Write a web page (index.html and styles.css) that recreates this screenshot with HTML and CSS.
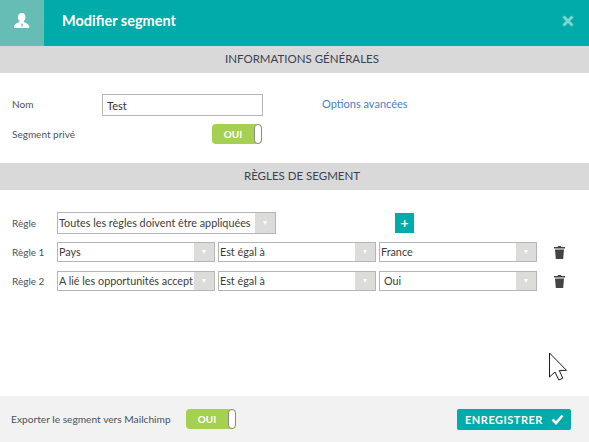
FILE: index.html
```html
<!DOCTYPE html>
<html lang="fr">
<head>
<meta charset="utf-8">
<title>Modifier segment</title>
<link rel="stylesheet" href="styles.css">
</head>
<body>
<div class="modal">
  <header class="head">
    <div class="head-icon">
      <svg width="18" height="18" viewBox="0 0 18 18"><path fill="#fff" d="M9 1c2.200 0 3.500 1.700 3.500 3.900 0 1.700-.7 3.100-1.700 3.900v1.300c1.200.8 4.300 1.500 5.200 3.400.3.600.3 1.400.3 2.500H1c0-1.100 0-1.900.3-2.500.9-1.900 4-2.600 5.200-3.400V8.800C5.500 8 4.800 6.600 4.800 4.900 4.800 2.700 6.800 1 9 1z"/><path fill="#66bdb5" d="M9 16l-1.200-5 1.200 1.400L10.200 11z"/></svg>
    </div>
    <h1 class="head-title">Modifier segment</h1>
    <svg class="head-close" width="12" height="12" viewBox="0 0 12 12"><path d="M1.500 1.500l9 9M10.500 1.500l-9 9" stroke="#7fd5cf" stroke-width="3"/></svg>
  </header>

  <h2 class="bar">INFORMATIONS GÉNÉRALES</h2>
  <section class="general">
    <div class="general-labels">
      <div class="label label-nom">Nom</div>
      <div class="label label-prive">Segment privé</div>
    </div>
    <div class="general-fields">
      <input class="text-input" type="text" value="Test">
      <div class="toggle"><span class="toggle-on">OUI</span><span class="toggle-knob"></span></div>
    </div>
    <a class="advanced" href="#">Options avancées</a>
  </section>

  <h2 class="bar">RÈGLES DE SEGMENT</h2>
  <section class="rules">
    <div class="rule-row rule-head">
      <span class="label rule-label">Règle</span>
      <div class="select select-wide"><span class="select-text">Toutes les règles doivent être appliquées</span><span class="select-arrow"></span></div>
      <button class="add-btn" type="button">+</button>
    </div>
    <div class="rule-row">
      <span class="label rule-label">Règle 1</span>
      <div class="select"><span class="select-text">Pays</span><span class="select-arrow"></span></div>
      <div class="select"><span class="select-text">Est égal à</span><span class="select-arrow"></span></div>
      <div class="select"><span class="select-text">France</span><span class="select-arrow"></span></div>
      <svg class="trash" width="11" height="13" viewBox="0 0 11 13"><path fill="#444" d="M4 0h3l.4 1H11v1.500H0V1h3.600zM1 3.500h9L9.200 13H1.800z"/></svg>
    </div>
    <div class="rule-row">
      <span class="label rule-label">Règle 2</span>
      <div class="select"><span class="select-text">A lié les opportunités accept</span><span class="select-arrow"></span></div>
      <div class="select"><span class="select-text">Est égal à</span><span class="select-arrow"></span></div>
      <div class="select"><span class="select-text select-indent">Oui</span><span class="select-arrow"></span></div>
      <svg class="trash" width="11" height="13" viewBox="0 0 11 13"><path fill="#444" d="M4 0h3l.4 1H11v1.500H0V1h3.600zM1 3.500h9L9.200 13H1.800z"/></svg>
    </div>
  </section>

  <footer class="foot">
    <span class="foot-label">Exporter le segment vers Mailchimp</span>
    <div class="toggle"><span class="toggle-on">OUI</span><span class="toggle-knob"></span></div>
    <button class="save" type="button">ENREGISTRER
      <svg width="13" height="11" viewBox="0 0 13 11"><path d="M1.500 5.500l3.500 3.500 6.500-7.500" fill="none" stroke="#fff" stroke-width="2.600"/></svg>
    </button>
  </footer>

  <svg class="cursor" width="20" height="29" viewBox="0 0 20 29"><path fill="#fff" stroke="#1a1a2a" stroke-width="1" d="M1.500 1v24l5.500-5 3.800 8 4-1.800-3.500-7.700 7.200-.2z"/></svg>
</div>
</body>
</html>
```
FILE: styles.css
```css
* { box-sizing: border-box; }
html, body { margin: 0; padding: 0; background: #fff; }
body { font-family: "Lato", "Liberation Sans", sans-serif; color: #3d4654; }
.modal { position: relative; width: 589px; height: 442px; overflow: hidden; display: flex; flex-direction: column; }

.head { height: 46px; background: #00aba9; display: flex; align-items: center; flex: none; }
.head-icon { width: 44px; height: 46px; background: #66bdb5; display: flex; align-items: center; justify-content: center; padding-bottom: 5px; }
.head-title { margin: 0 0 5px 18px; font-size: 14.500px; font-weight: 700; color: #fff; flex: 1; }
.head-close { margin-right: 15px; margin-bottom: 5px; }

.bar { margin: 0; height: 27px; flex: none; padding: 0 0 1px 15px; background: #d9d9d9; color: #3a4252; font-size: 11.500px; font-weight: 400; line-height: 26px; text-align: center; }

.general { height: 90px; flex: none; display: flex; padding: 21px 0 0 12px; }
.general-labels { width: 90px; }
.label { font-size: 10px; color: #4a5260; }
.label-nom { height: 22px; line-height: 20px; }
.label-prive { margin-top: 8px; height: 20px; line-height: 20px; }
.general-fields { width: 161px; display: flex; flex-direction: column; gap: 8px; align-items: flex-end; }
.general-fields .toggle { margin-right: 1px; }
.text-input { width: 161px; height: 22px; border: 1px solid #b5b5b5; padding: 0 4px; font: 11px "Lato", sans-serif; color: #333; background: #fff; outline: none; }
.advanced { margin: 2px 0 0 59px; font-size: 11px; line-height: 16px; color: #4a80c8; text-decoration: none; height: 16px; }

.toggle { width: 50px; height: 20px; border-radius: 4px; background: #a6d04f; display: flex; flex: none; overflow: hidden; }
.toggle-on { flex: 1; color: #fff; font-size: 10px; font-weight: 700; line-height: 20px; text-align: center; }
.toggle-knob { width: 8px; height: 20px; background: #fff; border: 1px solid #8a8a8a; border-radius: 4px; }

.rules { flex: 1; padding: 22px 0 0 12px; display: flex; flex-direction: column; }
.rule-row { display: flex; align-items: center; height: 20px; margin-bottom: 9px; gap: 3px; }
.rule-head { height: 22px; margin-bottom: 8px; }
.rule-label { width: 42px; flex: none; font-size: 10px; }
.select { width: 158px; height: 20px; border: 1px solid #b5b5b5; display: flex; background: #fff; flex: none; }
.select-wide { width: 219px; height: 22px; }
.select-text { flex: 1; min-width: 0; white-space: nowrap; font-size: 10.800px; line-height: 18px; padding-left: 1px; color: #3c3c3c; }
.select-wide .select-text { line-height: 20px; }
.select-indent { padding-left: 4px; }
.select-arrow { width: 20px; flex: none; background: #dcdcda; display: flex; align-items: center; justify-content: center; }
.select-arrow::after { content: ""; border-left: 2.500px solid transparent; border-right: 2.500px solid transparent; border-top: 4px solid #fff; }
.add-btn { margin-left: 116px; width: 19px; height: 20px; background: #00aba9; color: #fff; border: 0; padding: 0; font: 700 14px/18px "Lato", sans-serif; }
.trash { margin-left: 14px; flex: none; }

.foot { height: 46px; flex: none; background: #f2f2f2; display: flex; align-items: center; padding: 0 18px 0 11px; }
.foot-label { width: 175px; font-size: 10.200px; color: #4a5260; }
.save { margin-left: auto; width: 114px; height: 21px; background: #00aba9; border: 0; border-radius: 2px; color: #fff; font: 700 11px/21px "Lato", sans-serif; letter-spacing: .5px; padding: 0 0 0 1px; display: flex; align-items: center; justify-content: center; gap: 8px; }

.cursor { position: absolute; left: 548px; top: 352px; }
```
